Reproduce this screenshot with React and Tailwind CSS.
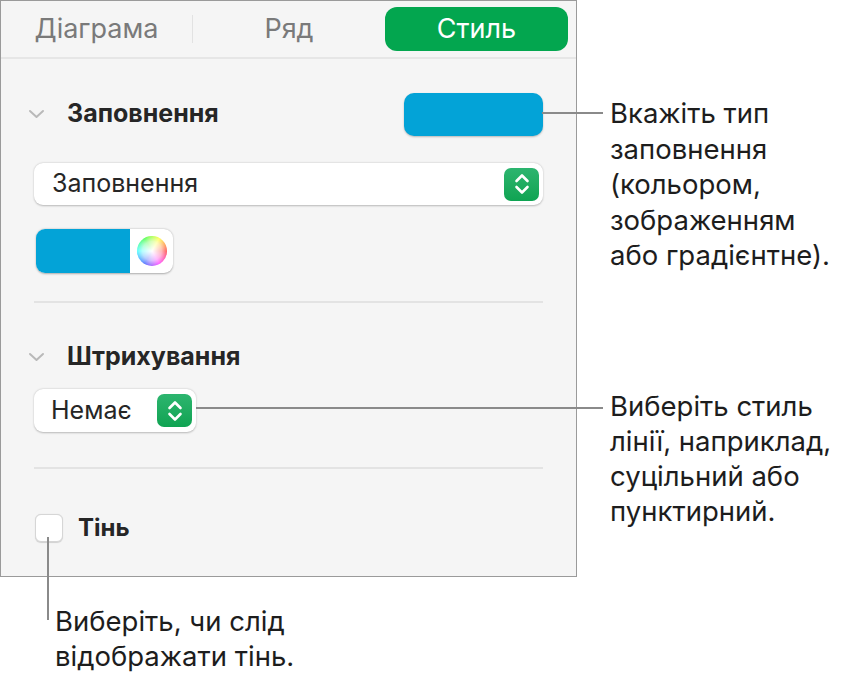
import React from 'react';

const Chevron = () => (
  <svg width="17" height="10" viewBox="0 0 17 10" className="-ml-[6px] shrink-0">
    <path d="M2 2 L8.5 8 L15 2" fill="none" stroke="#b9b9b9" strokeWidth="2" strokeLinecap="round" strokeLinejoin="round" />
  </svg>
);

const Stepper = () => (
  <div className="w-[35px] h-[33px] rounded-[7px] bg-gradient-to-b from-[#2cb56f] to-[#0ea352] flex items-center justify-center shrink-0">
    <svg width="18" height="26" viewBox="0 0 18 26">
      <path d="M3.5 10 L9 4.5 L14.5 10" fill="none" stroke="white" strokeWidth="2.6" strokeLinecap="round" strokeLinejoin="round" />
      <path d="M3.5 16 L9 21.5 L14.5 16" fill="none" stroke="white" strokeWidth="2.6" strokeLinecap="round" strokeLinejoin="round" />
    </svg>
  </div>
);

const App = () => {
  return (
    <div className="relative w-[846px] h-[681px] bg-white overflow-hidden font-['Inter','Liberation_Sans',sans-serif]">
      {/* inspector panel */}
      <div className="w-[577px] h-[577px] border border-[#9a9a9a] bg-[#f5f5f5] flex flex-col">
        <div className="h-[58px] flex items-center border-b-2 border-[#e6e6e6] shrink-0">
          <div className="w-[191px] text-center text-[27px] text-[#7a7a7a]">Діаграма</div>
          <div className="w-px h-[28px] bg-[#e2e2e2]" />
          <div className="w-[192px] text-center text-[27px] text-[#7a7a7a]">Ряд</div>
          <div className="w-[183px] h-[44px] rounded-[12px] bg-[#03a64f] flex items-center justify-center text-[27px] text-white">Стиль</div>
        </div>

        <div className="pl-[33px] pr-[33px] pt-[33px] flex flex-col">
          <div className="h-[44px] flex items-center">
            <Chevron />
            <span className="ml-[22px] text-[25px] font-bold text-[#262626]">Заповнення</span>
            <div className="ml-auto w-[139px] h-[43px] rounded-[10px] bg-[#03a3d7] shadow-[0_1px_2px_rgba(0,0,0,0.25)]" />
          </div>

          <div className="mt-[27px] h-[42px] rounded-[9px] bg-white shadow-[0_0.5px_2px_rgba(0,0,0,0.25)] flex items-center pl-[18px] pr-[4px]">
            <span className="text-[25px] text-[#262626]">Заповнення</span>
            <div className="ml-auto"><Stepper /></div>
          </div>

          <div className="mt-[24px] ml-[2px] w-[137px] h-[44px] rounded-[9px] bg-white shadow-[0_0.5px_2px_rgba(0,0,0,0.3)] flex overflow-hidden">
            <div className="w-[94px] h-full bg-[#03a3d7]" />
            <div className="flex-1 flex items-center justify-center">
              <div className="relative w-[30px] h-[30px] rounded-full bg-[conic-gradient(from_90deg,#ff4d4d,#ff4dff,#4d6bff,#4dffff,#4dff4d,#ffff4d,#ff4d4d)]">
                <div className="absolute inset-0 rounded-full bg-[radial-gradient(circle,white_0%,rgba(255,255,255,0.6)_45%,rgba(255,255,255,0)_75%)]" />
              </div>
            </div>
          </div>

          <div className="mt-[28px] h-[2px] bg-[#e3e3e3]" />

          <div className="mt-[39px] h-[30px] flex items-center">
            <Chevron />
            <span className="ml-[22px] text-[25px] font-bold text-[#262626]">Штрихування</span>
          </div>

          <div className="mt-[17px] w-[162px] h-[43px] rounded-[9px] bg-white shadow-[0_0.5px_2px_rgba(0,0,0,0.25)] flex items-center pl-[17px] pr-[4px]">
            <span className="text-[25px] text-[#262626]">Немає</span>
            <div className="ml-auto"><Stepper /></div>
          </div>

          <div className="mt-[35px] h-[2px] bg-[#e3e3e3]" />

          <div className="mt-[41px] flex items-center">
            <div className="ml-[1px] w-[28px] h-[28px] rounded-[6px] bg-white border border-[#d6d6d6] shadow-[0_0.5px_1px_rgba(0,0,0,0.15)]" />
            <span className="ml-[15px] text-[24px] font-bold text-[#262626]">Тінь</span>
          </div>
        </div>
      </div>

      {/* callout leaders */}
      <div className="absolute left-[542px] top-[112px] w-[61px] h-[2px] bg-[#8a8a8a]" />
      <div className="absolute left-[196px] top-[407px] w-[407px] h-[2px] bg-[#8a8a8a]" />
      <div className="absolute left-[47px] top-[537px] w-[2px] h-[83px] bg-[#8a8a8a]" />

      {/* callout texts */}
      <div className="absolute left-[610px] top-[96px] text-[27.5px] leading-[35.5px] text-[#1d1d1d]">
        Вкажіть тип<br />заповнення<br />(кольором,<br />зображенням<br />або градієнтне).
      </div>
      <div className="absolute left-[610px] top-[389px] text-[27.5px] leading-[35px] text-[#1d1d1d]">
        Виберіть стиль<br />лінії, наприклад,<br />суцільний або<br />пунктирний.
      </div>
      <div className="absolute left-[55px] top-[604px] text-[27.5px] leading-[35px] text-[#1d1d1d]">
        Виберіть, чи слід<br />відображати тінь.
      </div>
    </div>
  );
};

export default App;
